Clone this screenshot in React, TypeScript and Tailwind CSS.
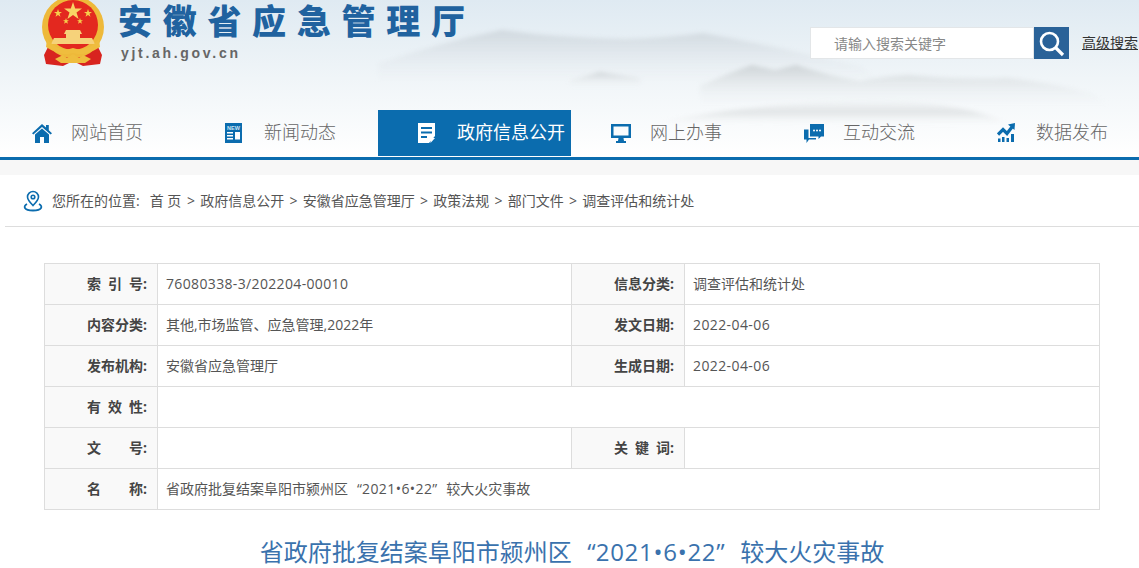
import React from 'react';

const page = "font-['Open_Sans','Noto_Sans_CJK_SC',sans-serif]";

function Emblem() {
  return (
    <svg width="64" height="70" viewBox="0 0 64 70" className="shrink-0">
      <path d="M9 46 L3 58 L5 67 L22 69 L32 64 L42 69 L59 67 L61 58 L55 46 Z" fill="#d8241f" />
      <circle cx="32" cy="30" r="31" fill="#eeb93a" />
      <circle cx="32" cy="28" r="25" fill="#e3281f" />
      <path d="M32 5 l2.200 6.500 h6.800 l-5.500 4 2.100 6.500 -5.600 -4 -5.600 4 2.100 -6.500 -5.500 -4 h6.800z" fill="#f8d565" />
      <path d="M17 12 l1 3 h3 l-2.500 1.800 1 3 -2.500 -1.800 -2.500 1.800 1 -3 -2.500 -1.800 h3z" fill="#f6cf4c" />
      <path d="M47 12 l1 3 h3 l-2.500 1.800 1 3 -2.500 -1.800 -2.500 1.800 1 -3 -2.500 -1.800 h3z" fill="#f6cf4c" />
      <path d="M25 21 l.8 2.200 h2.200 l-1.800 1.400 .8 2.200 -2 -1.300 -2 1.300 .8 -2.200 -1.800 -1.400 h2.200z" fill="#f6cf4c" />
      <path d="M39 21 l.8 2.200 h2.200 l-1.800 1.400 .8 2.200 -2 -1.300 -2 1.300 .8 -2.200 -1.800 -1.400 h2.200z" fill="#f6cf4c" />
      <path d="M23 37 L25 33 H39 L41 37 Z M25 37 H39 V41 H25 Z M13 41 H51 L54 47 H10 Z" fill="#f6d27a" />
      <path d="M6 42 Q18 56 32 51 Q46 56 58 42 L59 50 Q44 60 32 56 Q20 60 5 50 Z" fill="#efbd3e" />
      <path d="M14 62 L22 58 L26 61 L32 57 L38 61 L42 58 L50 62 L44 66 H20Z" fill="#efbd3e" />
    </svg>
  );
}

// misty ridges behind the header
function Mountains() {
  return (
    <svg className="absolute inset-0 blur-[2px]" width="1139" height="157" viewBox="0 0 1139 157">
      <defs>
        <linearGradient id="ridgeBack" x1="0" y1="0" x2="0" y2="1">
          <stop offset="0" stopColor="#c9d1d7" stopOpacity="0.75" />
          <stop offset="1" stopColor="#e6ebef" stopOpacity="0" />
        </linearGradient>
        <linearGradient id="ridgeFront" x1="0" y1="0" x2="0" y2="1">
          <stop offset="0" stopColor="#c6cccf" stopOpacity="0.8" />
          <stop offset="1" stopColor="#ecEff1" stopOpacity="0" />
        </linearGradient>
        <linearGradient id="ridgeLow" x1="0" y1="0" x2="0" y2="1">
          <stop offset="0" stopColor="#dcdfe1" stopOpacity="0" />
          <stop offset="0.5" stopColor="#dcdfe1" stopOpacity="0.8" />
          <stop offset="1" stopColor="#f4f5f6" stopOpacity="0" />
        </linearGradient>
      </defs>
      <path d="M378 64 Q440 42 502 30 Q560 38 625 39 Q665 38 703 33 Q770 45 860 66 L880 82 H378Z" fill="url(#ridgeBack)" />
      <path d="M570 80 L600 72 L640 78 V86 H570Z" fill="url(#ridgeFront)" />
      <path d="M700 86 Q730 72 752 65 L775 70 L796 65 Q830 76 860 81 Q885 76 909 75 Q960 80 1007 78 Q1060 84 1092 94 L1110 104 H700Z" fill="url(#ridgeFront)" />
      <path d="M660 122 Q760 102 880 100 Q970 104 1010 124Z" fill="url(#ridgeLow)" />
    </svg>
  );
}

function HomeIcon() {
  return (
    <svg width="20" height="19" viewBox="0 0 20 19">
      <path fill="#0b6cae" d="M10 0 L14 3.600 V1 H16.800 V6.200 L20 9.200 L18.600 10.600 L10 3 L1.400 10.600 L0 9.200 Z" />
      <path fill="#0b6cae" d="M3 10.500 L10 4.500 L17 10.500 V19 H12 V13 H8 V19 H3 Z" />
    </svg>
  );
}

function NewsIcon() {
  return (
    <svg width="17" height="20" viewBox="0 0 17 20">
      <rect width="17" height="20" fill="#0b6cae" />
      <text x="8.500" y="6.500" textAnchor="middle" fontSize="5.500" fontWeight="700" fontFamily="Liberation Sans" fill="#cfe4f3">NEW</text>
      <path fill="#fff" d="M2 9h6v1.500H2z M2 12h6v1.500H2z M2 15h6v1.500H2z M10 9h5v7.500h-5z" />
    </svg>
  );
}

function DocIcon() {
  return (
    <svg width="17" height="20" viewBox="0 0 17 20">
      <path fill="#fff" fillRule="evenodd" d="M0 0h17v13l-6 7H0z M3 4v2h11V4z M3 8.500v2h11v-2z M3 13v2h6v-2z" />
      <path fill="#fff" d="M12.500 15H17l-4.500 5z" />
    </svg>
  );
}

function ScreenIcon() {
  return (
    <svg width="20" height="19" viewBox="0 0 20 19">
      <path fill="#0b6cae" fillRule="evenodd" d="M0 0h20v14H0z M2.500 2.500v9h15v-9z" />
      <path fill="#0b6cae" d="M7.500 14h5l.5 3h2v2H5v-2h2z" />
    </svg>
  );
}

function ChatIcon() {
  return (
    <svg width="20" height="19" viewBox="0 0 20 19">
      <path fill="#0b6cae" d="M6 0h14v12.500h-3l-2.500 2.500v-2.500H6z" />
      <path fill="#0b6cae" d="M0 5.500h4.500v8.500H12v1.500H5l-2.500 3.500v-3.500H0z" />
      <circle cx="10" cy="6.500" r="1" fill="#fff" />
      <circle cx="13" cy="6.500" r="1" fill="#fff" />
      <circle cx="16" cy="6.500" r="1" fill="#fff" />
    </svg>
  );
}

function ChartIcon() {
  return (
    <svg width="18" height="20" viewBox="0 0 18 20">
      <path fill="#0b6cae" d="M1 15.500h2.500V19H1zM5 14h2.500v5H5zM9.500 15h2.500v4H9.500zM14 11h3v8h-3z" />
      <path fill="none" stroke="#0b6cae" strokeWidth="3.200" d="M1 11.500 L6 6.500 L10 10.500 L15 4" />
      <path fill="#0b6cae" d="M11 1.500 L18 0 L17.500 7z" />
    </svg>
  );
}

const navItems: { label: string; icon: React.ReactNode; active?: boolean }[] = [
  { label: '网站首页', icon: <HomeIcon /> },
  { label: '新闻动态', icon: <NewsIcon /> },
  { label: '政府信息公开', icon: <DocIcon />, active: true },
  { label: '网上办事', icon: <ScreenIcon /> },
  { label: '互动交流', icon: <ChatIcon /> },
  { label: '数据发布', icon: <ChartIcon /> },
];

const crumbs = ['政府信息公开', '安徽省应急管理厅', '政策法规', '部门文件', '调查评估和统计处'];

// full width quote cell, the latin font's quotes are too narrow
function Quoted({ children }: { children: React.ReactNode }) {
  return (
    <>
      <span className="inline-block w-[1em] text-right">“</span>
      <span className="tracking-[0.03em]">{children}</span>
      <span className="inline-block w-[1em] text-left">”</span>
    </>
  );
}

function Label({ text }: { text: string }) {
  return (
    <div className="flex h-10 w-[112px] shrink-0 items-center bg-[#f9f9f9] pb-[2px] pl-[42px] text-[14px] font-bold text-[#444]">
      <div className="flex w-[60px] justify-between">
        {text.split(' ').map((part) => (
          <span key={part} className="whitespace-nowrap">{part}</span>
        ))}
      </div>
    </div>
  );
}

function Value({ children, wide }: { children?: React.ReactNode; wide?: boolean }) {
  return (
    <div className={wide ? 'flex h-10 flex-1 items-center border-l border-[#ddd] pb-[2px] pl-2 text-[14px] text-[#555]' : 'flex h-10 w-[415px] shrink-0 items-center border-x border-[#ddd] pb-[2px] pl-2 text-[14px] text-[#555]'}>
      {children}
    </div>
  );
}

function Row({ a, b, c, d, last }: { a: string; b?: React.ReactNode; c?: string; d?: React.ReactNode; last?: boolean }) {
  return (
    <div className={last ? 'flex' : 'flex border-b border-[#ddd]'}>
      <Label text={a} />
      {c ? (
        <>
          <Value>{b}</Value>
          <Label text={c} />
          <Value wide>{d}</Value>
        </>
      ) : (
        <Value wide>{b}</Value>
      )}
    </div>
  );
}

export default function App() {
  return (
    <div className={`h-[568px] w-[1139px] overflow-hidden bg-white ${page}`}>
      {/* header */}
      <div className="relative h-[157px] bg-gradient-to-b from-[#dfeaf2] via-[#f0f5f8] to-white">
        <Mountains />
        <div className="relative flex h-[110px] items-start pl-[41px]">
          <div className="-mt-[3px]">
            <Emblem />
          </div>
          <div className="ml-[13px]">
            <div className="whitespace-nowrap text-[34px] font-black leading-[42px] tracking-[10.700px] text-[#20629f]">安徽省应急管理厅</div>
            <div className="ml-[3px] mt-[2px] font-['Liberation_Sans',sans-serif] text-[14px] font-bold leading-[18px] tracking-[2.700px] text-[#666]">yjt.ah.gov.cn</div>
          </div>
          <div className="ml-auto mt-[27px] flex items-center">
            <div className="flex h-8 w-[224px] items-center border border-[#e3e6e8] bg-white pl-[23px] text-[14px] text-[#888]">请输入搜索关键字</div>
            <div className="flex h-8 w-[35px] items-center justify-center bg-[#2a6298]">
              <svg width="27" height="27" viewBox="0 0 27 27" fill="none" stroke="#fff">
                <circle cx="11.500" cy="11.500" r="8.500" strokeWidth="2.600" />
                <path d="M17.500 17.500 L25 25" strokeWidth="3.200" />
              </svg>
            </div>
            <div className="-mt-[2px] ml-[13px] w-[57px] whitespace-nowrap text-[14px] text-[#333] underline">高级搜索</div>
          </div>
        </div>
        <nav className="relative -ml-2 flex h-[47px] w-[1160px]">
          {navItems.map((item) => (
            <div key={item.label} className={item.active ? 'flex h-[46px] w-[193px] items-center bg-[#0b6cae] text-white' : 'flex h-[46px] w-[193px] items-center text-[#666]'}>
              <div className="ml-[40px] flex w-[39px] items-center">{item.icon}</div>
              <span className={item.active ? 'whitespace-nowrap pb-[1px] text-[18px] font-normal' : 'whitespace-nowrap pb-[1px] text-[18px] font-light'}>{item.label}</span>
            </div>
          ))}
        </nav>
      </div>
      <div className="h-[3px] bg-[#0b6cae]" />
      <div className="h-[15px] bg-[#f7f7f7]" />

      {/* breadcrumb */}
      <div className="ml-[5px] flex h-[52px] items-center border-b border-[#ddd] pl-[18px] text-[14px] text-[#555]">
        <svg width="20" height="22" viewBox="0 0 20 22" fill="none" stroke="#0b6cae" strokeWidth="1.600" className="mr-[9px]">
          <path d="M10 15.500 C6 11.500 4.500 9.500 4.500 7 A5.500 5.500 0 0 1 15.500 7 C15.500 9.500 14 11.500 10 15.500Z" />
          <circle cx="10" cy="7" r="1.800" />
          <path d="M4 14 C0 16 0.500 20.500 10 20.500 C19.500 20.500 20 16 16 14" strokeWidth="1.800" />
        </svg>
        <span className="mr-[10px]">您所在的位置:</span>
        <span className="w-[32px] whitespace-pre">首 页</span>
        {crumbs.map((c) => (
          <span key={c} className="whitespace-pre">
            <span className="mx-[5.25px]">&gt;</span>
            {c}
          </span>
        ))}
      </div>

      {/* info table */}
      <div className="ml-[44px] mt-9 w-[1056px] border border-[#ddd]">
        <Row a="索 引 号:" b={<span className="tracking-[0.35px]">76080338-3/202204-00010</span>} c="信息分类:" d="调查评估和统计处" />
        <Row a="内容分类:" b="其他,市场监管、应急管理,2022年" c="发文日期:" d={<span className="tracking-[0.4px]">2022-04-06</span>} />
        <Row a="发布机构:" b="安徽省应急管理厅" c="生成日期:" d={<span className="tracking-[0.4px]">2022-04-06</span>} />
        <Row a="有 效 性:" />
        <Row a="文 号:" c="关 键 词:" />
        <Row
          a="名 称:"
          b={
            <span>
              省政府批复结案阜阳市颍州区<Quoted>2021•6•22</Quoted>较大火灾事故
            </span>
          }
          last
        />
      </div>

      <h1 className="mt-[24px] pl-[5px] text-center text-[24px] font-normal leading-[36px] text-[#3a72ad]">
        省政府批复结案阜阳市颍州区<Quoted>2021•6•22</Quoted>较大火灾事故
      </h1>
    </div>
  );
}
